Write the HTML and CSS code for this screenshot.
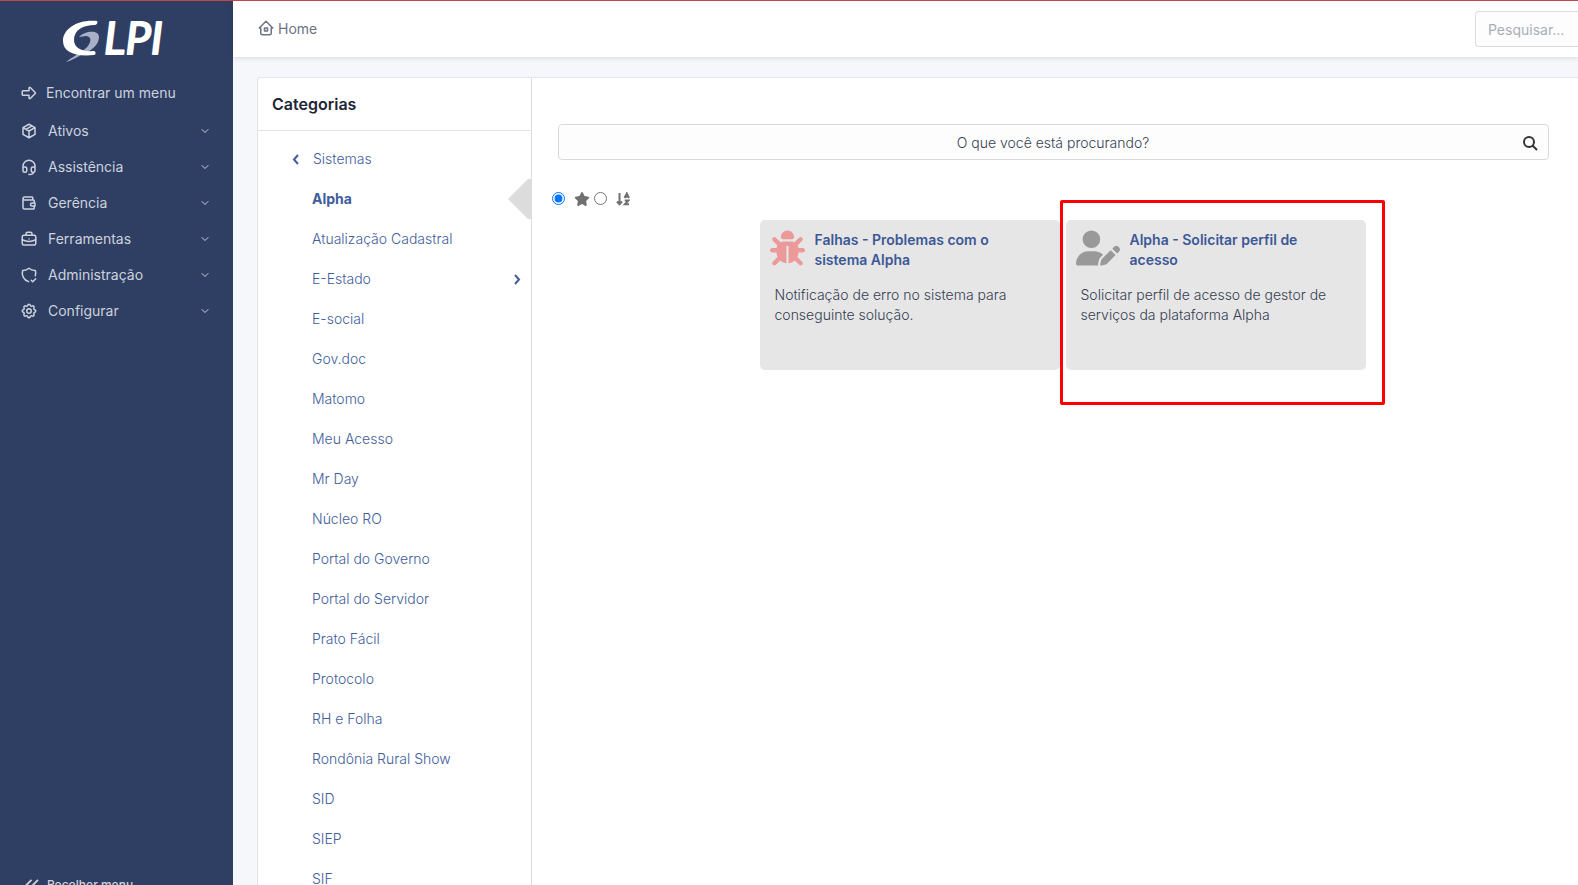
FILE: index.html
```html
<!DOCTYPE html>
<html lang="pt-BR">
<head>
<meta charset="utf-8">
<title>GLPI - Home</title>
<link rel="stylesheet" href="styles.css">
</head>
<body>
<div class="app">
  <aside class="sidebar">
    <a class="logo" href="#" aria-label="GLPI">
      <svg width="112" height="56" viewBox="0 -8 112 56">
        <path d="M18 20C23 14 38 12 38 20C38 28 30 34 20 38C15 41 9 44 5 45C10 41 19 36 24 32C29 28 31 22 28 20C25 18 22 20 18 20Z" fill="#a9afc8"/>
        <path d="M36 4C18 2 2 11 2 24C2 35 14 40 33 38C35 38 35 34 33 34C21 35 13 31 13 23C13 13 22 8 34 8C36 8 37 5 36 4Z" fill="#fff"/>
        <text class="logo-text" x="43" y="37">LPI</text>
      </svg>
    </a>
    <nav class="menu">
      <a class="find" href="#"><svg class="ti" viewBox="0 0 24 24"><path d="M4 9h8V5.400a1 1 0 0 1 1.700-.7l6.600 6.600a1 1 0 0 1 0 1.400l-6.600 6.600a1 1 0 0 1-1.700-.7V15H4a1 1 0 0 1-1-1v-4a1 1 0 0 1 1-1z"/></svg><span>Encontrar um menu</span></a>
      <a class="item" href="#"><svg class="ti" viewBox="0 0 24 24"><path d="M12 3l8 4.500v9L12 21l-8-4.500v-9L12 3M12 12l8-4.500M12 12v9M12 12L4 7.500M16 5.250l-8 4.500"/></svg><span>Ativos</span><svg class="chev" viewBox="0 0 24 24"><path d="M6 9l6 6l6-6"/></svg></a>
      <a class="item" href="#"><svg class="ti" viewBox="0 0 24 24"><path d="M4 14v-3a8 8 0 1 1 16 0v3M18 19c0 1.660-2.690 3-6 3M4 14a2 2 0 0 1 2-2h1a2 2 0 0 1 2 2v3a2 2 0 0 1-2 2H6a2 2 0 0 1-2-2zM15 14a2 2 0 0 1 2-2h1a2 2 0 0 1 2 2v3a2 2 0 0 1-2 2h-1a2 2 0 0 1-2-2z"/></svg><span>Assistência</span><svg class="chev" viewBox="0 0 24 24"><path d="M6 9l6 6l6-6"/></svg></a>
      <a class="item" href="#"><svg class="ti" viewBox="0 0 24 24"><path d="M17 8V5a1 1 0 0 0-1-1H6a2 2 0 0 0 0 4h12a1 1 0 0 1 1 1v3m0 4v3a1 1 0 0 1-1 1H6a2 2 0 0 1-2-2V6M20 12v4h-4a2 2 0 0 1 0-4h4"/></svg><span>Gerência</span><svg class="chev" viewBox="0 0 24 24"><path d="M6 9l6 6l6-6"/></svg></a>
      <a class="item" href="#"><svg class="ti" viewBox="0 0 24 24"><rect x="3" y="7" width="18" height="13" rx="2"/><path d="M8 7V5a2 2 0 0 1 2-2h4a2 2 0 0 1 2 2v2M12 12v.01M3 13a20 20 0 0 0 18 0"/></svg><span>Ferramentas</span><svg class="chev" viewBox="0 0 24 24"><path d="M6 9l6 6l6-6"/></svg></a>
      <a class="item" href="#"><svg class="ti" viewBox="0 0 24 24"><path d="M11.460 20.850A12 12 0 0 1 3.500 6A12 12 0 0 0 12 3a12 12 0 0 0 8.500 3a12 12 0 0 1-.09 7.060M15 19l2 2l4-4"/></svg><span>Administração</span><svg class="chev" viewBox="0 0 24 24"><path d="M6 9l6 6l6-6"/></svg></a>
      <a class="item" href="#"><svg class="ti" viewBox="0 0 24 24"><path d="M10.325 4.317c.426-1.756 2.924-1.756 3.350 0a1.724 1.724 0 0 0 2.573 1.066c1.543-.94 3.310.826 2.370 2.370a1.724 1.724 0 0 0 1.065 2.572c1.756.426 1.756 2.924 0 3.350a1.724 1.724 0 0 0-1.066 2.573c.94 1.543-.826 3.310-2.370 2.370a1.724 1.724 0 0 0-2.572 1.065c-.426 1.756-2.924 1.756-3.350 0a1.724 1.724 0 0 0-2.573-1.066c-1.543.94-3.310-.826-2.370-2.370a1.724 1.724 0 0 0-1.065-2.572c-1.756-.426-1.756-2.924 0-3.350a1.724 1.724 0 0 0 1.066-2.573c-.94-1.543.826-3.310 2.370-2.370c1 .608 2.296.07 2.572-1.065z"/><circle cx="12" cy="12" r="3"/></svg><span>Configurar</span><svg class="chev" viewBox="0 0 24 24"><path d="M6 9l6 6l6-6"/></svg></a>
    </nav>
    <button class="collapse" type="button"><svg viewBox="0 0 16 14"><path d="M8 1L2 7l6 6M15 1L9 7l6 6"/></svg><span>Recolher menu</span></button>
  </aside>

  <div class="page">
    <header class="topbar">
      <a class="crumb" href="#"><svg class="ti" viewBox="0 0 24 24"><path d="M5 12H3l9-9l9 9h-2M5 12v7a2 2 0 0 0 2 2h10a2 2 0 0 0 2-2v-7M10 12h4v4h-4z"/></svg><span>Home</span></a>
      <input class="global-search" type="text" placeholder="Pesquisar..." aria-label="Pesquisar">
    </header>

    <main class="catalog">
      <section class="categories">
        <h2>Categorias</h2>
        <a class="back" href="#"><svg viewBox="0 0 7 11"><path d="M6 1L2 5.500L6 10"/></svg><span>Sistemas</span></a>
        <ul>
          <li class="active"><a href="#">Alpha</a><svg class="pointer" viewBox="0 0 23 40"><path d="M0 20L20 0H23V40H20Z"/></svg></li>
          <li><a href="#">Atualização Cadastral</a></li>
          <li><a href="#">E-Estado</a><svg class="more" viewBox="0 0 7 11"><path d="M1 1L5 5.500L1 10"/></svg></li>
          <li><a href="#">E-social</a></li>
          <li><a href="#">Gov.doc</a></li>
          <li><a href="#">Matomo</a></li>
          <li><a href="#">Meu Acesso</a></li>
          <li><a href="#">Mr Day</a></li>
          <li><a href="#">Núcleo RO</a></li>
          <li><a href="#">Portal do Governo</a></li>
          <li><a href="#">Portal do Servidor</a></li>
          <li><a href="#">Prato Fácil</a></li>
          <li><a href="#">Protocolo</a></li>
          <li><a href="#">RH e Folha</a></li>
          <li><a href="#">Rondônia Rural Show</a></li>
          <li><a href="#">SID</a></li>
          <li><a href="#">SIEP</a></li>
          <li><a href="#">SIF</a></li>
        </ul>
      </section>

      <section class="results">
        <form class="search">
          <input type="text" placeholder="O que você está procurando?" aria-label="O que você está procurando?">
          <button type="button" aria-label="Buscar"><svg viewBox="0 0 15 15"><circle cx="6" cy="6" r="5"/><path d="M9.500 9.500L14 14"/></svg></button>
        </form>
        <div class="sort">
          <input type="radio" name="sort" id="sort-pop" checked>
          <label for="sort-pop" aria-label="Popularidade"><svg width="16" height="14" viewBox="0 0 576 512"><path d="M316.900 18C311.600 7 300.400 0 288.100 0s-23.400 7-28.800 18L195 150.300 51.400 171.500c-12 1.800-22 10.200-25.700 21.700s-.7 24.200 7.900 32.700L137.800 329 113.200 474.700c-2 12 3 24.200 12.900 31.300s23 8 33.800 2.300l128.300-68.500 128.300 68.500c10.800 5.700 23.900 4.900 33.800-2.300s14.900-19.300 12.900-31.300L438.500 329 542.700 225.900c8.600-8.500 11.700-21.200 7.900-32.700s-13.700-19.900-25.700-21.700L381.200 150.300 316.900 18z"/></svg></label>
          <input type="radio" name="sort" id="sort-az">
          <label for="sort-az" aria-label="Ordem alfabética"><svg class="az" width="14" height="14" viewBox="0 0 14 14"><path d="M3.500 1V12M1 9.500L3.500 12.300L6 9.500M8.500 6L10.800 1.500L13 6M9.300 4.800H12.300M8.700 8.500H12.500L8.900 12.300H13"/></svg></label>
        </div>
        <div class="cards">
          <article class="card">
            <div class="head"><svg class="bug" width="35" height="36" viewBox="0 0 512 512"><path d="M256 0c53 0 96 43 96 96v3.600c0 15.700-12.700 28.400-28.400 28.400H188.400c-15.700 0-28.400-12.700-28.400-28.400V96c0-53 43-96 96-96zM41.400 105.400c12.500-12.500 32.800-12.500 45.300 0l64 64c.7 .7 1.300 1.400 1.900 2.100c14.200-7.300 30.400-11.400 47.500-11.400H312c17.100 0 33.200 4.100 47.500 11.400c.6-.7 1.200-1.400 1.900-2.100l64-64c12.500-12.500 32.800-12.500 45.300 0s12.500 32.800 0 45.300l-64 64c-.7 .7-1.400 1.300-2.100 1.900c6.200 12 10.100 25.300 11.100 39.500H480c17.700 0 32 14.300 32 32s-14.300 32-32 32H416c0 24.600-5.500 47.800-15.400 68.600c2.200 1.300 4.200 2.900 6 4.800l64 64c12.500 12.500 12.500 32.800 0 45.300s-32.800 12.500-45.300 0l-63.100-63.100c-24.500 21.800-55.800 36.200-90.300 39.600V240c0-8.800-7.200-16-16-16s-16 7.200-16 16V479.200c-34.500-3.400-65.800-17.800-90.300-39.600L86.600 502.600c-12.500 12.500-32.800 12.500-45.300 0s-12.500-32.800 0-45.300l64-64c1.900-1.900 3.900-3.400 6-4.800C101.500 367.800 96 344.600 96 320H32c-17.700 0-32-14.300-32-32s14.300-32 32-32H96.300c1.100-14.100 5-27.500 11.100-39.500c-.7-.6-1.400-1.200-2.100-1.900l-64-64c-12.500-12.500-12.500-32.800 0-45.300z"/></svg><a href="#">Falhas - Problemas com o sistema Alpha</a></div>
            <p>Notificação de erro no sistema para conseguinte solução.</p>
          </article>
          <article class="card marked">
            <div class="head"><svg class="user" width="44" height="36" viewBox="0 0 640 512"><path d="M224 256A128 128 0 1 0 224 0a128 128 0 1 0 0 256zm-45.700 48C79.800 304 0 383.800 0 482.300C0 498.700 13.300 512 29.700 512H322.800c-3.100-8.800-3.700-18.400-1.400-27.800l15-60.100c2.800-11.300 8.600-21.500 16.800-29.700l40.300-40.300c-32.100-31-75.700-50.100-123.900-50.100H178.300zm435.500-68.300c-15.600-15.600-40.900-15.600-56.600 0l-29.400 29.400 71 71 29.400-29.400c15.600-15.600 15.600-40.900 0-56.600l-14.400-14.400zM375.900 417c-4.100 4.100-7 9.200-8.400 14.900l-15 60.100c-1.400 5.500 .2 11.200 4.200 15.200s9.700 5.600 15.200 4.200l60.100-15c5.600-1.400 10.800-4.300 14.900-8.400L576.100 358.700l-71-71L375.900 417z"/></svg><a href="#">Alpha - Solicitar perfil de acesso</a></div>
            <p>Solicitar perfil de acesso de gestor de serviços da plataforma Alpha</p>
          </article>
        </div>
      </section>
    </main>
  </div>
</div>
</body>
</html>
```
FILE: styles.css
```css
* { box-sizing: border-box; }
body {
  margin: 0;
  font: 14px/20px Inter, "Liberation Sans", sans-serif;
  color: #495265;
  background: #f5f7fb;
}
a { color: inherit; text-decoration: none; }
svg { display: block; flex: none; }
.app {
  display: flex;
  height: 100vh;
  overflow: hidden;
  border-top: 1px solid #c0464b;
}

.sidebar {
  display: flex;
  flex-direction: column;
  flex: none;
  width: 233px;
  background: #2f3f64;
  color: #cdd2dc;
}
.logo { padding: 8px 0 0 61px; }
.logo-text {
  font: italic 400 45px Lato, sans-serif;
  fill: #fff;
  stroke: #fff;
  stroke-width: 2;
  stroke-linejoin: round;
}
.menu { padding-top: 8px; }
.find, .item { display: flex; align-items: center; height: 36px; padding: 0 22px 0 20px; }
.find { gap: 8px; margin: 2px 0; }
.item { gap: 10px; }
.ti, .chev {
  width: 18px;
  height: 18px;
  fill: none;
  stroke: currentColor;
  stroke-width: 2;
  stroke-linecap: round;
  stroke-linejoin: round;
}
.chev { width: 12px; height: 12px; margin-left: auto; }
.collapse {
  display: flex;
  align-items: center;
  gap: 8px;
  margin: auto 0 -10px;
  padding: 0 24px;
  border: 0;
  background: none;
  color: inherit;
  font: 500 12px/20px Inter, sans-serif;
}
.collapse svg { width: 15px; height: 13px; fill: none; stroke: currentColor; stroke-width: 2; }

.page { display: flex; flex-direction: column; flex: 1; min-width: 0; }
.topbar {
  display: flex;
  align-items: center;
  justify-content: space-between;
  flex: none;
  height: 56px;
  padding-left: 24px;
  background: #fff;
  box-shadow: 0 1px 5px rgba(35, 46, 60, .16);
}
.crumb { display: flex; align-items: center; gap: 3px; color: #6c7482; }
.crumb svg { margin-bottom: 3px; }
.global-search {
  width: 103px;
  height: 36px;
  padding: 0 12px;
  border: 1px solid #d9dbde;
  border-right: 0;
  border-radius: 4px 0 0 4px;
  background: #fdfdfd;
  font: inherit;
}
.global-search::placeholder { color: #a9adb6; opacity: 1; }

.catalog {
  display: flex;
  flex: 1;
  min-height: 0;
  margin: 20px 0 0 24px;
  border: 1px solid #e2e5e9;
  border-width: 1px 0 0 1px;
  border-radius: 4px 0 0 0;
  background: #fff;
  overflow: hidden;
}
.categories { flex: none; width: 274px; border-right: 1px solid #dadcde; color: #415d9c; font-weight: 300; }
.categories h2 {
  margin: 0;
  padding: 16px 14px;
  border-bottom: 1px solid #e2e3e6;
  color: #1e2536;
  font-size: 16px;
  font-weight: 600;
  line-height: 20px;
}
.back { display: flex; align-items: center; gap: 14px; height: 40px; margin-top: 8px; padding-left: 34px; }
.back svg, .more { width: 7px; height: 11px; fill: none; stroke: currentColor; stroke-width: 2; }
.categories ul { margin: 0; padding: 0; list-style: none; }
.categories li { display: flex; align-items: center; justify-content: space-between; height: 40px; padding-left: 54px; }
.categories .active { font-weight: 700; }
.pointer { width: 23px; height: 40px; fill: #dcdcdc; }
.more { margin-right: 10px; }

.results { flex: 1; min-width: 0; padding: 46px 0 0 15px; }
.search {
  display: flex;
  align-items: center;
  height: 36px;
  margin: 0 29px 0 11px;
  border: 1px solid #d7d9dc;
  border-radius: 4px;
  background: #fdfdfd;
}
.search input {
  flex: 1;
  min-width: 0;
  padding: 2px 0 0 34px;
  border: 0;
  background: none;
  font: inherit;
  font-weight: 300;
  text-align: center;
}
.search input::placeholder { color: #354052; opacity: 1; }
.search button { padding: 2px 10px 0; border: 0; background: none; }
.search svg { width: 15px; height: 15px; fill: none; stroke: #333; stroke-width: 2; }
.sort { display: flex; align-items: center; margin-top: 30px; padding-left: 5px; }
.sort input { width: 13px; height: 13px; margin: 0; }
.sort label { padding: 2px 4px 0 9px; }
.sort svg { fill: #707070; }
.sort .az { fill: none; stroke: #707070; stroke-width: 2; }

.cards { display: flex; justify-content: center; gap: 6px; margin-top: 14px; }
.card {
  position: relative;
  width: 300px;
  min-height: 150px;
  padding: 10px;
  border-radius: 5px;
  background: #e6e6e6;
}
.head { display: flex; gap: 10px; min-height: 40px; padding-right: 36px; }
.head a { color: #3c5896; font-weight: 600; }
.bug { fill: #eb9999; }
.user { fill: #999; }
.card p { margin: 15px 5px 0; font-weight: 300; color: #354052; }
.marked::after {
  content: "";
  position: absolute;
  inset: -20px -19px -35px -6px;
  border: 3px solid #f00;
  border-radius: 2px;
  pointer-events: none;
}
```
